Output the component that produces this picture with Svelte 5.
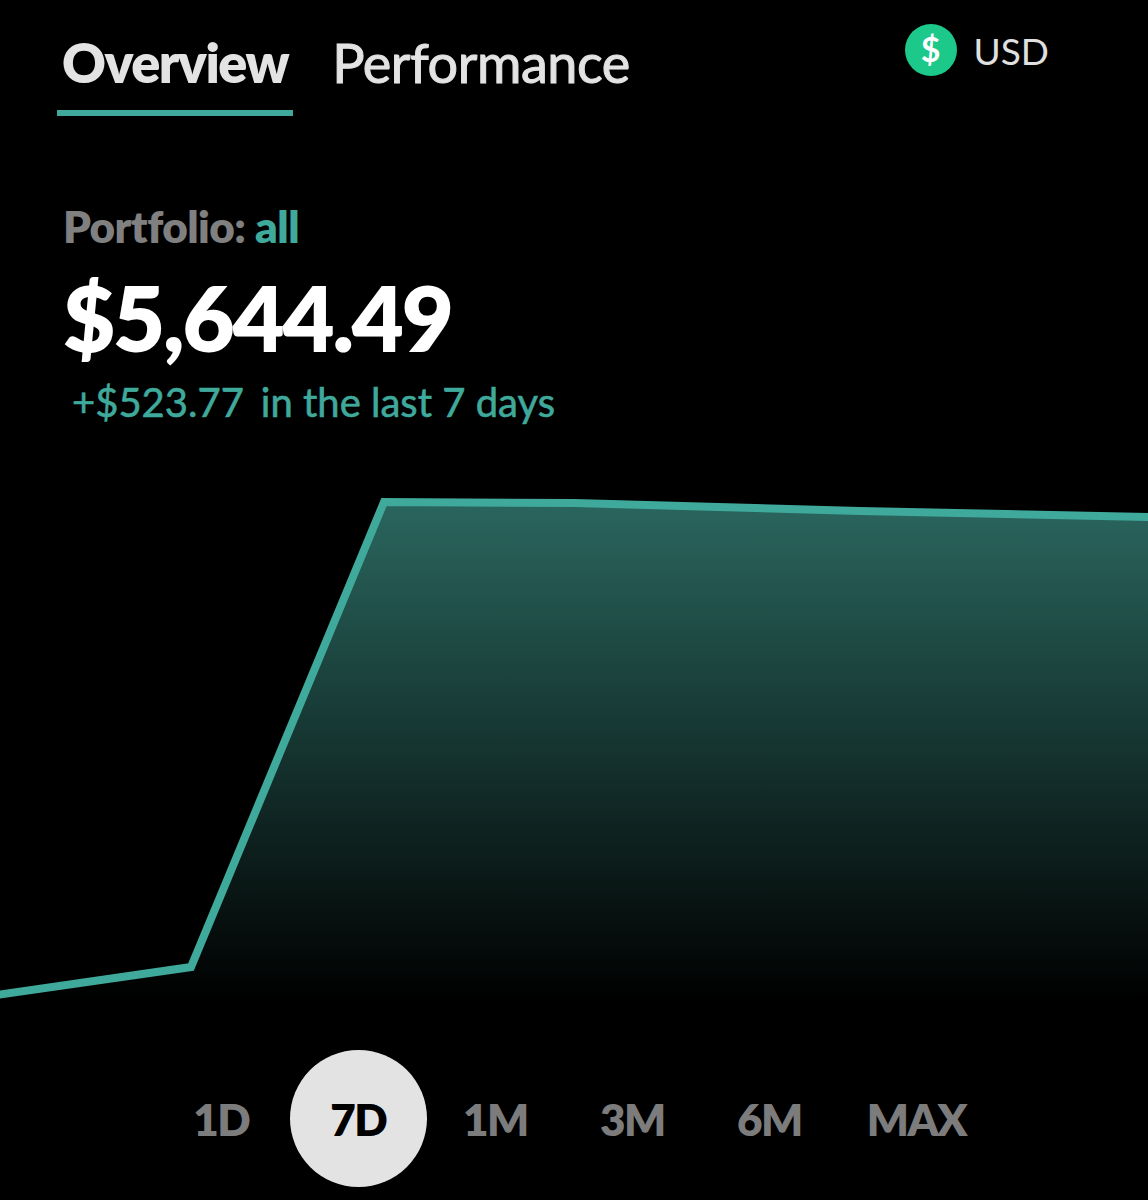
<script>
  const ranges = ['1D', '7D', '1M', '3M', '6M', 'MAX'];
  let active = $state('7D');

  // chart box is 1148x540, top edge sits at y=480 on the page
  const points = [[-4, 515], [191, 487], [384, 22], [575, 23], [860, 31], [1152, 37]];
  const line = points.map((p) => p.join(',')).join(' ');
  const area = `${line} 1152,540 -4,540`;
</script>

<div class="screen">
  <header class="top">
    <nav class="tabs">
      <span class="tab tab--active">Overview</span>
      <span class="tab">Performance</span>
    </nav>
    <div class="currency">
      <span class="coin">$</span>
      <span class="code">USD</span>
    </div>
  </header>

  <section class="summary">
    <p class="portfolio">Portfolio: <span class="accent">all</span></p>
    <p class="amount">$5,644.49</p>
    <p class="change"><span>+$523.77</span><span class="period">in the last 7 days</span></p>
  </section>

  <svg class="chart" viewBox="0 0 1148 540" width="1148" height="540" aria-hidden="true">
    <defs>
      <linearGradient id="fade" x1="0" y1="22" x2="0" y2="520" gradientUnits="userSpaceOnUse">
        <stop offset="0" stop-color="#2a665e" />
        <stop offset="1" stop-color="#000000" />
      </linearGradient>
    </defs>
    <polygon points={area} fill="url(#fade)" />
    <polyline points={line} fill="none" stroke="#3fa99b" stroke-width="8" stroke-linejoin="miter" />
  </svg>

  <div class="ranges">
    {#each ranges as r}
      <button class="range" class:range--active={active === r} onclick={() => (active = r)}>{r}</button>
    {/each}
  </div>
</div>

<style>
  :global(body) {
    background: #000;
  }

  .screen {
    width: 1148px;
    height: 1200px;
    background: #000;
    overflow: hidden;
    font-family: Lato, "Open Sans", sans-serif;
  }

  /* Tabs + currency */
  .top {
    display: flex;
    justify-content: space-between;
    align-items: flex-start;
    padding: 0 99px 0 57px;
    height: 116px;
  }

  .tabs {
    display: flex;
    gap: 34px;
  }

  .tab {
    height: 110px;
    padding: 0 5px;
    font-size: 54px;
    line-height: 126px;
    font-weight: 400;
    color: #e3e3e3;
    letter-spacing: -0.45px;
    -webkit-text-stroke: 1px #e3e3e3;
  }

  .tab--active {
    font-weight: 800;
    letter-spacing: -1.5px;
    -webkit-text-stroke: 0;
    box-shadow: 0 6px 0 #3fa99b;
  }

  .currency {
    display: flex;
    align-items: center;
    gap: 17px;
    padding-top: 24px;
  }

  .coin {
    width: 52px;
    height: 52px;
    border-radius: 50%;
    background: #1cc98a;
    color: #fff;
    font-size: 34px;
    font-weight: 700;
    line-height: 50px;
    text-align: center;
  }

  .code {
    font-size: 37px;
    font-weight: 400;
    color: #e0e0e0;
  }

  /* Balance */
  .summary {
    height: 364px;
    padding: 85px 0 0 63px;
    box-sizing: border-box;
  }

  .summary p {
    margin: 0;
  }

  .portfolio {
    font-size: 44px;
    line-height: 50px;
    font-weight: 800;
    color: #808080;
    letter-spacing: -0.55px;
  }

  .accent {
    color: #3fa99b;
  }

  .summary .amount {
    margin-top: 16px;
    font-size: 90px;
    line-height: 100px;
    font-weight: 800;
    color: #fff;
    letter-spacing: -2.2px;
  }

  .summary .change {
    margin-top: 10px;
    padding-left: 9px;
    font-size: 40px;
    line-height: 50px;
    font-weight: 400;
    color: #3fa99b;
    -webkit-text-stroke: 0.6px #3fa99b;
  }

  .period {
    margin-left: 17px;
  }

  .chart {
    display: block;
  }

  /* Range picker */
  .ranges {
    display: flex;
    justify-content: center;
    margin-top: 30px;
  }

  .range {
    min-width: 137px;
    height: 137px;
    padding: 0 29px;
    border: none;
    border-radius: 50%;
    background: transparent;
    color: #7c7c7c;
    font-family: inherit;
    font-size: 44px;
    font-weight: 800;
    letter-spacing: -1.5px;
    cursor: pointer;
  }

  .range--active {
    background: #e3e3e3;
    color: #000;
  }
</style>
